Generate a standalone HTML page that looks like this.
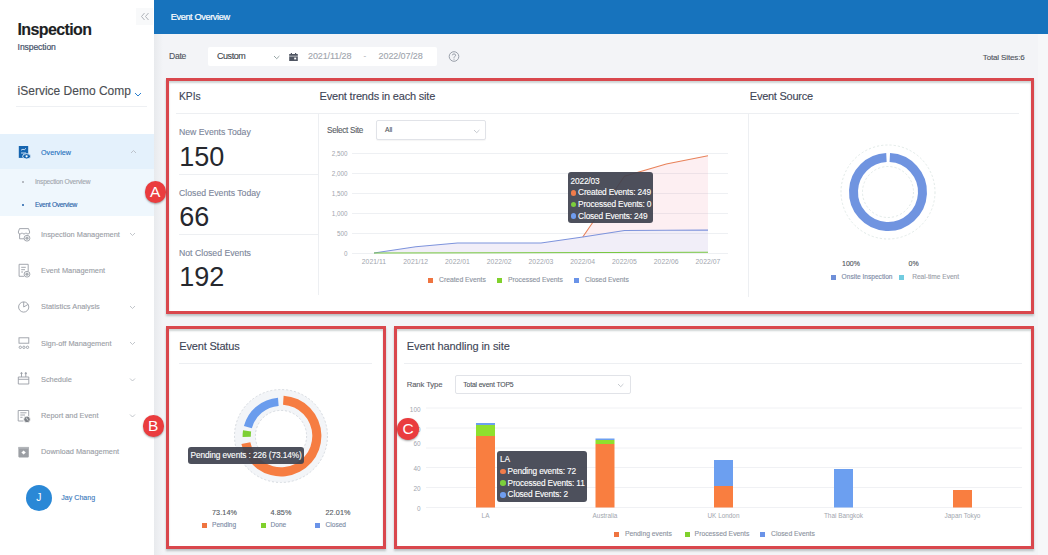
<!DOCTYPE html>
<html><head><meta charset="utf-8">
<style>
*{box-sizing:border-box;margin:0;padding:0}
html,body{width:1048px;height:555px;overflow:hidden;background:#f3f4f7;font-family:"Liberation Sans",sans-serif;-webkit-text-stroke-width:0.12px}
.a{position:absolute;white-space:nowrap;line-height:1}
.menu{font-size:7.4px;color:#9a9ea6}
.ttl{font-size:11px;color:#3e4556}
.hl{position:absolute;height:1px;background:#edeff2}
.vl{position:absolute;width:1px;background:#edeff2}
.kl{font-size:8.7px;color:#7c869a}
.kv{font-size:27px;color:#26282e;-webkit-text-stroke-width:0}
.lg{font-size:6.8px;color:#8c93a0}
.sq{position:absolute;width:5px;height:5px}
.tip{position:absolute;background:rgba(64,67,80,.93);border-radius:3px;color:#fff;font-size:8.3px;letter-spacing:-0.15px;line-height:11.6px}
.dot{display:inline-block;width:5.6px;height:5.6px;border-radius:50%;margin-right:2px;vertical-align:-0.3px}
.rb{position:absolute;border:3px solid #d9474d;box-shadow:0 2px 2px rgba(80,100,100,.35), inset 0 2px 2px rgba(80,100,100,.28)}
.badge{position:absolute;width:21.5px;height:21.5px;border-radius:50%;background:#ea3c3e;color:#fff;font-size:15.5px;line-height:22.5px;text-align:center;box-shadow:0 1px 2px rgba(0,0,0,.35);-webkit-text-stroke-width:0}
svg.a{overflow:visible}
</style></head><body>

<!-- SIDEBAR -->
<div class="a" style="left:0;top:0;width:154px;height:555px;background:#fff"></div>
<div class="a" style="left:17.5px;top:21.6px;font-size:16px;font-weight:700;color:#1d1f24;letter-spacing:-0.62px">Inspection</div>
<div class="a" style="left:17.6px;top:42.9px;font-size:8.6px;color:#46526a;letter-spacing:-0.1px;-webkit-text-stroke-width:0.2px">Inspection</div>
<div class="a" style="left:136px;top:8px;width:17px;height:17px;background:#f8f9fa"></div>
<svg class="a" style="left:140px;top:12px" width="10" height="9" viewBox="0 0 10 9"><path d="M4.5 1 L1.5 4.5 L4.5 8 M8.5 1 L5.5 4.5 L8.5 8" fill="none" stroke="#a6aab1" stroke-width="0.9"/></svg>
<div class="a" style="left:17.6px;top:85.3px;font-size:12px;color:#4a4d52">iService Demo Comp</div>
<svg class="a" style="left:133.5px;top:92px" width="8" height="5" viewBox="0 0 8 5"><path d="M1 1 L4 4 L7 1" fill="none" stroke="#2a7fd0" stroke-width="1"/></svg>
<div class="a" style="left:16px;top:105.5px;width:131px;height:1px;background:#eef0f3"></div>

<div class="a" style="left:0;top:134px;width:154px;height:35px;background:#e4f1fc"></div>
<div class="a" style="left:0;top:169px;width:154px;height:47px;background:#eff7fd"></div>
<svg class="a" style="left:17px;top:145px" width="14" height="15" viewBox="0 0 14 15">
  <rect x="1.8" y="1" width="9.4" height="11.9" fill="#1565b0"/>
  <path d="M4 5.2 L6 4.2 L7.2 4.8 L9 3.3 M4 8 H9" stroke="#d6e7f8" stroke-width="0.9" fill="none"/>
  <ellipse cx="9.6" cy="11.3" rx="4" ry="2.7" fill="#1565b0" stroke="#e4f1fc" stroke-width="0.9"/>
  <circle cx="9.6" cy="11.3" r="1.1" fill="#fff"/>
</svg>
<div class="a" style="left:41px;top:148.5px;font-size:7.2px;color:#2470bd">Overview</div>
<svg class="a" style="left:129.5px;top:149px" width="7" height="5" viewBox="0 0 7 5"><path d="M1 4 L3.5 1.5 L6 4" fill="none" stroke="#b3b7be" stroke-width="0.8"/></svg>
<div class="a" style="left:22px;top:181px;width:2.2px;height:2.2px;border-radius:50%;background:#a3a7ae"></div>
<div class="a" style="left:35px;top:179.2px;font-size:6.6px;color:#a3a7ae;letter-spacing:-0.21px">Inspection Overview</div>
<div class="a" style="left:22px;top:203.7px;width:2.2px;height:2.2px;border-radius:50%;background:#1f5fa8"></div>
<div class="a" style="left:35px;top:202.2px;font-size:6.6px;color:#2763a8;letter-spacing:-0.3px">Event Overview</div>

<div class="a menu" style="left:41px;top:230.8px">Inspection Management</div>
<div class="a menu" style="left:41px;top:267px">Event Management</div>
<div class="a menu" style="left:41px;top:303.2px">Statistics Analysis</div>
<div class="a menu" style="left:41px;top:339.5px">Sign-off Management</div>
<div class="a menu" style="left:41px;top:375.7px">Schedule</div>
<div class="a menu" style="left:41px;top:411.9px">Report and Event</div>
<div class="a menu" style="left:41px;top:448px">Download Management</div>
<svg class="a" style="left:0;top:0" width="154" height="555" viewBox="0 0 154 555">
  <g fill="none" stroke="#b3b7be" stroke-width="0.8">
    <path d="M130 233 L132.5 235.5 L135 233"/>
    <path d="M130 306 L132.5 308.5 L135 306"/>
    <path d="M130 342 L132.5 344.5 L135 342"/>
    <path d="M130 378.5 L132.5 381 L135 378.5"/>
    <path d="M130 414.5 L132.5 417 L135 414.5"/>
  </g>
  <g fill="none" stroke="#9a9ea6" stroke-width="0.9">
    <!-- inspection mgmt -->
    <path d="M18.3 232 L19.5 228.6 H28.5 L29.7 232 Q29.7 234 28 234 Q26.5 234 26 232.8 Q25.3 234 24 234 Q22.7 234 22 232.8 Q21.5 234 20 234 Q18.3 234 18.3 232 Z"/>
    <path d="M19.6 234 V238.8 H24"/>
    <circle cx="27" cy="238.2" r="2.9" fill="#fff"/>
    <circle cx="27" cy="238.2" r="1.6" fill="#a9adb3" stroke="none"/>
    <!-- event mgmt -->
    <path d="M24 276.3 H19.1 V264.3 H28.2 V271 M21.2 267.3 H25.8 M21.2 269.7 H25 M21.2 272 H23"/>
    <circle cx="27" cy="274.2" r="2.9" fill="#fff"/>
    <circle cx="27" cy="274.2" r="1.6" fill="#a9adb3" stroke="none"/>
    <!-- statistics -->
    <circle cx="23.7" cy="307" r="5.1"/>
    <path d="M23.7 301.9 V307 L28.1 304.4"/>
    <!-- signoff -->
    <rect x="19" y="337.8" width="9.8" height="5.4"/>
    <circle cx="20.3" cy="347.3" r="1.2"/><circle cx="23.9" cy="347.3" r="1.2"/><circle cx="27.5" cy="347.3" r="1.2"/>
    <!-- schedule -->
    <path d="M18.3 377 H28.8 V384 H18.3 Z M18.3 379.3 H28.8 M21.5 377 V373.5 M25.8 377 V373.5"/>
    <circle cx="21.5" cy="373.3" r="0.7" fill="#9a9ea6"/><circle cx="25.8" cy="373.3" r="0.7" fill="#9a9ea6"/>
    <!-- report -->
    <path d="M23.5 421 H18.2 V410.5 H28.7 V416 M20.3 412.8 H26.5 M20.3 415 H25 M20.3 417.3 H22.5"/>
  </g>
  <circle cx="27" cy="419.4" r="3.3" fill="#7d8187" stroke="#fff" stroke-width="0.8"/>
  <path d="M26.4 417.6 L27.1 419.4 L28.3 420.4" fill="none" stroke="#fff" stroke-width="0.7"/>
  <!-- download -->
  <rect x="18.4" y="446.9" width="10.4" height="10.5" rx="0.8" fill="#9c9fa4"/>
  <rect x="18.4" y="446.9" width="10.4" height="1.8" fill="#b3b6ba"/>
  <path d="M23.6 450.6 L25.8 452.6 L23.6 454.6 L21.4 452.6 Z" fill="#fff"/>
</svg>

<div class="a" style="left:25.5px;top:484.8px;width:26.2px;height:26.2px;border-radius:50%;background:#2a88d6"></div>
<div class="a" style="left:25.7px;top:492.6px;width:26.2px;text-align:center;font-size:10.3px;color:#fff;-webkit-text-stroke-width:0">J</div>
<div class="a" style="left:61.3px;top:495.3px;font-size:7.1px;color:#3a79bd">Jay Chang</div>

<div class="a" style="left:154px;top:34px;width:9px;height:521px;background:linear-gradient(90deg,#e8eaed,#f3f4f7)"></div>
<div class="a" style="left:1038px;top:34px;width:10px;height:521px;background:#f6f7f9"></div>

<!-- HEADER -->
<div class="a" style="left:154px;top:0;width:894px;height:34px;background:#1773bd"></div>
<div class="a" style="left:170.7px;top:13px;font-size:9.2px;color:#fff;letter-spacing:-0.38px;-webkit-text-stroke-width:0.2px">Event Overview</div>

<!-- FILTER BAR -->
<div class="a" style="left:169px;top:52px;font-size:8.6px;color:#50555e;letter-spacing:-0.3px">Date</div>
<div class="a" style="left:208px;top:46.5px;width:229px;height:19.5px;background:#fff;border-radius:2px"></div>
<div class="a" style="left:217px;top:51.7px;font-size:9px;color:#41454c;letter-spacing:-0.45px">Custom</div>
<svg class="a" style="left:272.5px;top:54.5px" width="8" height="5" viewBox="0 0 8 5"><path d="M1 1 L3.7 3.7 L6.4 1" fill="none" stroke="#8a9a9a" stroke-width="0.9"/></svg>
<svg class="a" style="left:289px;top:52.5px" width="9" height="8" viewBox="0 0 9 8"><rect x="0.2" y="1" width="8.6" height="7" fill="#4f5562"/><rect x="1.8" y="0" width="1.2" height="2" fill="#4f5562"/><rect x="6" y="0" width="1.2" height="2" fill="#4f5562"/><rect x="0.2" y="2.8" width="8.6" height="0.6" fill="#fff"/><rect x="5.2" y="4.6" width="2" height="1.8" fill="#fff"/></svg>
<div class="a" style="left:308px;top:51.5px;font-size:9px;color:#a0a5ad;letter-spacing:-0.1px">2021/11/28</div>
<div class="a" style="left:363.5px;top:51.5px;font-size:8px;color:#a0a5ad">-</div>
<div class="a" style="left:378.6px;top:51.5px;font-size:9px;color:#a0a5ad;letter-spacing:-0.1px">2022/07/28</div>
<svg class="a" style="left:448px;top:50.5px" width="12" height="12" viewBox="0 0 12 12"><circle cx="6" cy="5.5" r="4.8" fill="none" stroke="#8f95a0" stroke-width="0.9"/><path d="M4.4 4.3 Q4.4 2.9 6 2.9 Q7.6 2.9 7.6 4.3 Q7.6 5.2 6.6 5.6 Q6 5.9 6 6.8" fill="none" stroke="#8f95a0" stroke-width="0.9"/><circle cx="6" cy="8.1" r="0.55" fill="#8f95a0"/></svg>
<div class="a" style="left:982.8px;top:53.5px;font-size:8px;color:#4e535c;letter-spacing:-0.14px">Total Sites:6</div>

<!-- CARD A -->
<div class="a" style="left:166px;top:78px;width:867px;height:236px;background:#fff"></div>
<div class="a ttl" style="left:179px;top:92.2px;font-size:10.3px">KPIs</div>
<div class="a ttl" style="left:319.6px;top:90.5px;letter-spacing:-0.2px">Event trends in each site</div>
<div class="a ttl" style="left:749.8px;top:90.5px;letter-spacing:-0.25px">Event Source</div>
<div class="hl" style="left:176px;top:113px;width:843px"></div>
<div class="vl" style="left:318px;top:113px;height:182px"></div>
<div class="vl" style="left:748px;top:113px;height:184px"></div>
<div class="hl" style="left:179px;top:174px;width:139px"></div>
<div class="hl" style="left:179px;top:234px;width:139px"></div>

<div class="a kl" style="left:179px;top:128.3px">New Events Today</div>
<div class="a kv" style="left:179.2px;top:143.5px">150</div>
<div class="a kl" style="left:179px;top:188.5px">Closed Events Today</div>
<div class="a kv" style="left:179.2px;top:203.5px">66</div>
<div class="a kl" style="left:179px;top:249px">Not Closed Events</div>
<div class="a kv" style="left:179.2px;top:264px">192</div>

<div class="a" style="left:327px;top:127px;font-size:8.2px;color:#5b5f67;letter-spacing:-0.28px">Select Site</div>
<div class="a" style="left:376.3px;top:120.3px;width:110px;height:19.8px;border:1px solid #e1e3e8;border-radius:2px;background:#fff;box-shadow:0 1px 1px rgba(0,0,0,.04)"></div>
<div class="a" style="left:385px;top:127.3px;font-size:6.6px;color:#50555e">All</div>
<svg class="a" style="left:473px;top:128.5px" width="8" height="5" viewBox="0 0 8 5"><path d="M1 1 L3.7 3.7 L6.4 1" fill="none" stroke="#b8bcc3" stroke-width="0.8"/></svg>

<!-- line chart -->
<svg class="a" style="left:0;top:0" width="1048" height="555" viewBox="0 0 1048 555">
  <g stroke="#eef0f3" stroke-width="1">
    <path d="M352 153.5 H728 M352 173.5 H728 M352 193.5 H728 M352 213.5 H728 M352 233.5 H728 M352 253.5 H728"/>
  </g>
  <path d="M582.75 237 L624.5 176.3 L666.25 164 L708 155.8 L708 230.1 L666.25 230.3 L624.5 230.5 Z" fill="rgba(240,100,130,0.1)"/>
  <path d="M374 253 L415.75 246.7 L457.5 243 L499.25 243 L541 243 L582.75 237 L624.5 230.5 L666.25 230.3 L708 230.1 L708 253 Z" fill="rgba(150,120,200,0.13)"/>
  <path d="M582.75 237 L624.5 176.3 L666.25 164 L708 155.8" fill="none" stroke="#e8825a" stroke-width="1.1"/>
  <path d="M374 253 L415.75 246.7 L457.5 243 L499.25 243 L541 243 L582.75 237 L624.5 230.5 L666.25 230.3 L708 230.1" fill="none" stroke="#7d93dc" stroke-width="1.1"/>
  <path d="M374 253 L708 252.3" fill="none" stroke="#79c842" stroke-width="1.1"/>
  <g font-family="Liberation Sans" font-size="6.3" fill="#a1a6ae" text-anchor="end">
    <text x="347.5" y="155.7">2,500</text><text x="347.5" y="175.7">2,000</text><text x="347.5" y="195.7">1,500</text><text x="347.5" y="215.7">1,000</text><text x="347.5" y="235.7">500</text><text x="347.5" y="255.7">0</text>
  </g>
  <g font-family="Liberation Sans" font-size="6.8" fill="#a1a6ae" text-anchor="middle" letter-spacing="0.05">
    <text x="374" y="264">2021/11</text><text x="415.75" y="264">2021/12</text><text x="457.5" y="264">2022/01</text><text x="499.25" y="264">2022/02</text><text x="541" y="264">2022/03</text><text x="582.75" y="264">2022/04</text><text x="624.5" y="264">2022/05</text><text x="666.25" y="264">2022/06</text><text x="708" y="264">2022/07</text>
  </g>

</svg>
<div class="sq" style="left:428px;top:277.5px;background:#ef7440"></div>
<div class="a lg" style="left:439px;top:276.8px">Created Events</div>
<div class="sq" style="left:497px;top:277.5px;background:#80d12c"></div>
<div class="a lg" style="left:508px;top:276.8px">Processed Events</div>
<div class="sq" style="left:574px;top:277.5px;background:#6a93e8"></div>
<div class="a lg" style="left:585px;top:276.8px">Closed Events</div>

<div class="tip" style="left:568px;top:172.3px;width:85px;height:51.2px;padding:3.6px 0 0 2.5px">2022/03<br><span class="dot" style="background:#f07c4b"></span>Created Events: 249<br><span class="dot" style="background:#7ccf3c"></span>Processed Events: 0<br><span class="dot" style="background:#6f9df0"></span>Closed Events: 249</div>

<!-- event source donut -->
<svg class="a" style="left:830px;top:134px" width="116" height="116" viewBox="-58 -58 116 116">
  <circle r="47" fill="none" stroke="#dbe5e2" stroke-width="0.8" stroke-dasharray="2.2 2"/>
  <circle r="25.5" fill="none" stroke="#dbe5e2" stroke-width="0.8" stroke-dasharray="2.2 2"/>
  <circle r="34.5" fill="none" stroke="#7094e0" stroke-width="9" stroke-dasharray="213 3.8" transform="rotate(-87)"/>
</svg>
<div class="a" style="left:842px;top:260.3px;font-size:7px;color:#4f545c">100%</div>
<div class="a" style="left:908.5px;top:260.3px;font-size:7px;color:#4f545c">0%</div>
<div class="sq" style="left:831.3px;top:275px;width:4.5px;height:4.5px;background:#6f8fd8"></div>
<div class="a" style="left:841.6px;top:273.8px;font-size:6.6px;color:#7b8aa5">Onsite Inspection</div>
<div class="sq" style="left:899px;top:275px;width:4.5px;height:4.5px;background:#72cce0"></div>
<div class="a" style="left:912.2px;top:273.8px;font-size:6.6px;color:#9aa0a8">Real-time Event</div>

<!-- CARD B -->
<div class="a" style="left:166px;top:326px;width:220px;height:222px;background:#fff"></div>
<div class="a ttl" style="left:179.3px;top:340.5px;letter-spacing:-0.18px">Event Status</div>
<div class="hl" style="left:179px;top:363px;width:193px"></div>
<svg class="a" style="left:222.5px;top:377.5px" width="116" height="116" viewBox="-58 -58 116 116" id="d1">
  <circle r="36" fill="none" stroke="#f3f5f8" stroke-width="21"/>
  <circle r="46.5" fill="none" stroke="#d8dce1" stroke-width="1" stroke-dasharray="2 2"/>
  <circle r="25.6" fill="none" stroke="#d8dce1" stroke-width="1" stroke-dasharray="2 2"/>
</svg>
<svg class="a" style="left:222.5px;top:377.5px" width="116" height="116" viewBox="-58 -58 116 116" id="d2"><path d="M2.61 -40.32 A40.4 40.4 0 1 1 -39.59 8.05 L-30.67 6.24 A31.3 31.3 0 1 0 2.02 -31.23 Z" fill="#f67d42"/>
<path d="M-38.39 1.01 A38.4 38.4 0 0 1 -37.97 -5.74 L-29.86 -4.52 A30.2 30.2 0 0 0 -30.19 0.79 Z" fill="#7dcf35"/>
<path d="M-37.09 -9.94 A38.4 38.4 0 0 1 -3.01 -38.28 L-2.37 -30.11 A30.2 30.2 0 0 0 -29.17 -7.82 Z" fill="#6a9ced"/>
</svg>
<div class="tip" style="left:188px;top:447.2px;width:116px;height:16.8px;font-size:8.3px;line-height:17.5px;padding-left:2.6px;letter-spacing:-0.1px">Pending events : 226 (73.14%)</div>
<div class="a" style="left:212px;top:509.3px;font-size:7.2px;color:#555a62;letter-spacing:0.1px">73.14%</div>
<div class="a" style="left:270.5px;top:509.3px;font-size:7.2px;color:#555a62;letter-spacing:0.1px">4.85%</div>
<div class="a" style="left:325.5px;top:509.3px;font-size:7.2px;color:#555a62;letter-spacing:0.1px">22.01%</div>
<div class="sq" style="left:202px;top:522.8px;width:5.3px;height:5.3px;background:#ef7440"></div>
<div class="a" style="left:212px;top:522px;font-size:6.6px;color:#7b8aa5">Pending</div>
<div class="sq" style="left:261px;top:522.8px;width:5.3px;height:5.3px;background:#80d12c"></div>
<div class="a" style="left:270.5px;top:522px;font-size:6.6px;color:#7b8aa5">Done</div>
<div class="sq" style="left:315px;top:522.8px;width:5.3px;height:5.3px;background:#6a93e8"></div>
<div class="a" style="left:325.5px;top:522px;font-size:6.6px;color:#7b8aa5">Closed</div>

<!-- CARD C -->
<div class="a" style="left:394px;top:326px;width:640px;height:222px;background:#fff"></div>
<div class="a ttl" style="left:406.7px;top:340.5px;letter-spacing:-0.07px">Event handling in site</div>
<div class="hl" style="left:404px;top:363px;width:618px"></div>
<div class="a" style="left:406.7px;top:380.7px;font-size:7.7px;color:#5d6169;letter-spacing:-0.1px">Rank Type</div>
<div class="a" style="left:454.5px;top:374.5px;width:176px;height:19.5px;border:1px solid #e1e3e8;border-radius:2px;background:#fff"></div>
<div class="a" style="left:463.2px;top:381.8px;font-size:6.8px;color:#50555e;letter-spacing:-0.12px">Total event TOP5</div>
<svg class="a" style="left:617px;top:382.5px" width="8" height="5" viewBox="0 0 8 5"><path d="M1 1 L3.7 3.7 L6.4 1" fill="none" stroke="#b8bcc3" stroke-width="0.8"/></svg>

<svg class="a" style="left:0;top:0" width="1048" height="555" viewBox="0 0 1048 555">
  <!-- bar chart -->
  <g stroke="#f0f1f4" stroke-width="1">
    <path d="M426 408 H1022 M426 428 H1022 M426 448 H1022 M426 467.5 H1022 M426 487.5 H1022 M426 507.5 H1022"/>
  </g>
  <g font-family="Liberation Sans" font-size="6.4" fill="#a1a6ae" text-anchor="end">
    <text x="420.5" y="411.7">100</text><text x="420.5" y="431.5">80</text><text x="420.5" y="446">60</text><text x="420.5" y="471">40</text><text x="420.5" y="490.8">20</text><text x="420.5" y="510.5">0</text>
  </g>
  <g>
    <rect x="476" y="436" width="19" height="71.5" fill="#f97e40"/>
    <rect x="476" y="425" width="19" height="11" fill="#8fe02e"/>
    <rect x="476" y="423" width="19" height="2" fill="#6c9ff0"/>
    <rect x="595.5" y="444" width="19" height="63.5" fill="#f97e40"/>
    <rect x="595.5" y="440" width="19" height="4" fill="#8fe02e"/>
    <rect x="595.5" y="438.5" width="19" height="1.5" fill="#6c9ff0"/>
    <rect x="714" y="486" width="19" height="21.5" fill="#f97e40"/>
    <rect x="714" y="460" width="19" height="26" fill="#6c9ff0"/>
    <rect x="834" y="469" width="19" height="38.5" fill="#6c9ff0"/>
    <rect x="953" y="490" width="19" height="17.5" fill="#f97e40"/>
  </g>
  <g font-family="Liberation Sans" font-size="6.4" fill="#a1a6ae" text-anchor="middle">
    <text x="485.5" y="518">LA</text><text x="605" y="518">Australia</text><text x="723.5" y="518">UK London</text><text x="843.5" y="518">Thai Bangkok</text><text x="962.5" y="518">Japan Tokyo</text>
  </g>
</svg>
<div class="tip" style="left:497px;top:450.5px;width:90px;height:51.5px;padding:3.6px 0 0 3px;line-height:11.8px">LA<br><span class="dot" style="background:#f07c4b"></span>Pending events: 72<br><span class="dot" style="background:#7ccf3c"></span>Processed Events: 11<br><span class="dot" style="background:#6f9df0"></span>Closed Events: 2</div>
<div class="sq" style="left:614px;top:531.8px;background:#ef7440"></div>
<div class="a lg" style="left:625px;top:530.7px">Pending events</div>
<div class="sq" style="left:684.5px;top:531.8px;background:#80d12c"></div>
<div class="a lg" style="left:694.6px;top:530.7px">Processed Events</div>
<div class="sq" style="left:760px;top:531.8px;background:#6a93e8"></div>
<div class="a lg" style="left:771px;top:530.7px">Closed Events</div>

<!-- RED ANNOTATION BOXES -->
<div class="rb" style="left:166px;top:78px;width:867.5px;height:235.5px"></div>
<div class="rb" style="left:165.5px;top:326px;width:220.5px;height:222.5px"></div>
<div class="rb" style="left:394px;top:326px;width:640px;height:222.5px"></div>
<div class="badge" style="left:144.5px;top:181.3px">A</div>
<div class="badge" style="left:142.5px;top:415px">B</div>
<div class="badge" style="left:397.3px;top:418px">C</div>

</body></html>
